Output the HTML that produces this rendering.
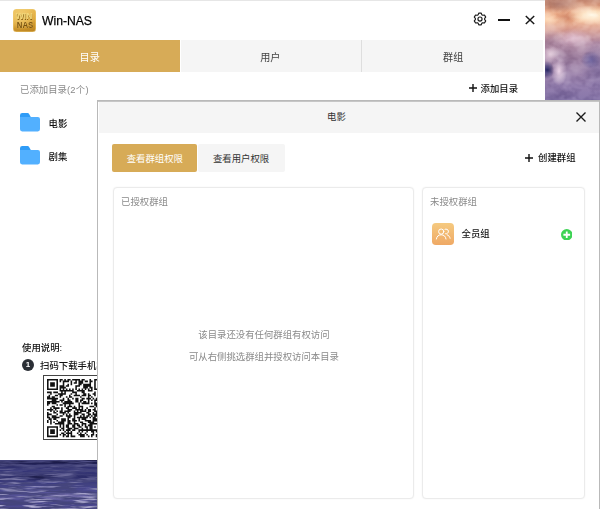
<!DOCTYPE html>
<html lang="zh-CN">
<head>
<meta charset="utf-8">
<title>Win-NAS</title>
<style>
*{box-sizing:border-box;margin:0;padding:0}
html,body{width:600px;height:509px;overflow:hidden;background:#fff}
body{position:relative;font-family:"Liberation Sans","Noto Sans CJK SC",sans-serif;font-size:11px;color:#222}
.abs{position:absolute}
#sky{left:545px;top:0;width:55px;height:101px;overflow:hidden;background:
radial-gradient(ellipse 24px 10px at 47px 15px,rgba(255,250,236,1),rgba(255,238,212,.85) 40%,rgba(255,226,196,0) 100%),
radial-gradient(ellipse 18px 26px at 52px 66px,rgba(118,104,160,.55),rgba(118,104,160,0) 100%),
radial-gradient(ellipse 12px 7px at 2px 19px,rgba(255,226,196,.9),rgba(252,210,176,0) 100%),
radial-gradient(ellipse 22px 9px at 14px 4px,rgba(170,116,104,.85),rgba(176,120,105,0) 100%),
radial-gradient(ellipse 14px 8px at 22px 18px,rgba(206,140,116,.6),rgba(206,140,116,0) 100%),
radial-gradient(ellipse 7px 9px at 2px 70px,rgba(44,44,110,.95),rgba(50,50,115,0) 100%),
radial-gradient(ellipse 8px 15px at 14px 71px,rgba(244,226,240,.95),rgba(240,220,235,0) 100%),
radial-gradient(ellipse 10px 10px at 5px 54px,rgba(236,212,226,.8),rgba(232,208,222,0) 100%),
radial-gradient(ellipse 10px 9px at 46px 60px,rgba(92,86,150,.85),rgba(98,90,152,0) 100%),
radial-gradient(ellipse 20px 9px at 28px 38px,rgba(232,204,220,.85),rgba(225,196,212,0) 100%),
radial-gradient(ellipse 16px 12px at 6px 42px,rgba(150,112,140,.6),rgba(150,112,140,0) 100%),
linear-gradient(180deg,#cf9a86 0%,#ecb596 10%,#f4c09e 20%,#dcaaa0 30%,#bc98ae 42%,#a88aa8 55%,#9e84aa 70%,#947fae 85%,#8877aa 100%)}
#sea{left:0;top:459.500px;width:97.500px;height:50px;overflow:hidden;background:
radial-gradient(ellipse 30px 5px at 62px 36px,rgba(160,150,200,.6),rgba(160,150,200,0) 100%),
radial-gradient(ellipse 26px 4px at 30px 29px,rgba(120,116,176,.5),rgba(120,116,176,0) 100%),
radial-gradient(ellipse 24px 4px at 38px 17px,rgba(24,24,62,.75),rgba(24,24,62,0) 100%),
linear-gradient(180deg,#101034 0%,#222258 8%,#38387a 20%,#2c2c68 34%,#3e3e84 48%,#4c4a90 62%,#5c589c 76%,#444288 88%,#585498 100%)}
#main{left:0;top:0;width:545px;height:460px;background:#fff;border-top:1px solid #e6e6e6}
.t{position:absolute;white-space:nowrap;line-height:14px}
#tabs{left:0;top:39px;width:543px;height:32px;background:#f5f5f5}
#tab1{left:0;top:0;width:180px;height:32px;background:#d7ab57;border-right:0}
.tabt{top:11.300px;color:#444;font-size:10.100px}
#dlg{left:97px;top:100px;width:503px;height:420px;background:#fff;border:1px solid #b9b9b9}
#dh{left:1px;top:1px;width:499.500px;height:30.800px;background:#f5f5f5}
#dlg::before{content:"";position:absolute;left:0;top:0;width:100%;height:.7px;background:#c6c6c6}
.btn{height:28.600px;top:42.500px;font-size:9.38px;text-align:center;line-height:28.600px;padding-top:1.200px;border-radius:2px}
.panel{border:1px solid #ebebeb;border-radius:4px;background:#fff;top:86px;height:311.500px;box-shadow:0 0 2px rgba(0,0,0,.05)}
.g{color:#8a8a8a}
</style>
</head>
<body>
<div id="sky" class="abs"><svg width="55" height="101" style="position:absolute;left:0;top:0;mix-blend-mode:soft-light;opacity:.4"><filter id="cl" x="0" y="0" width="100%" height="100%"><feTurbulence type="fractalNoise" baseFrequency="0.07 0.09" numOctaves="3" seed="11"/><feColorMatrix type="matrix" values="0 0 0 0 0  0 0 0 0 0  0 0 0 0 0  2.2 0 0 0 -0.6"/><feComposite in2="SourceGraphic" operator="in"/></filter><filter id="cd" x="0" y="0" width="100%" height="100%"><feTurbulence type="fractalNoise" baseFrequency="0.06 0.08" numOctaves="3" seed="4"/><feColorMatrix type="matrix" values="0 0 0 0 1  0 0 0 0 1  0 0 0 0 1  0 2.2 0 0 -0.9"/></filter><rect width="55" height="101" fill="#000" filter="url(#cl)"/><rect width="55" height="101" filter="url(#cd)"/></svg></div>
<div id="sea" class="abs"><svg width="98" height="50" style="position:absolute;left:0;top:0"><defs><linearGradient id="mg" x1="0" y1="0" x2="0" y2="1"><stop offset="0" stop-color="#fff" stop-opacity=".1"/><stop offset=".45" stop-color="#fff" stop-opacity=".5"/><stop offset="1" stop-color="#fff" stop-opacity="1"/></linearGradient><mask id="mk"><rect width="98" height="50" fill="url(#mg)"/></mask><filter id="wv" x="0" y="0" width="100%" height="100%"><feTurbulence type="fractalNoise" baseFrequency="0.04 0.4" numOctaves="3" seed="5"/><feColorMatrix type="matrix" values="0 0 0 0 0.06  0 0 0 0 0.06  0 0 0 0 0.2  3.5 0 0 0 -1.15"/></filter><filter id="wl" x="0" y="0" width="100%" height="100%"><feTurbulence type="fractalNoise" baseFrequency="0.04 0.42" numOctaves="3" seed="9"/><feColorMatrix type="matrix" values="0 0 0 0 0.6  0 0 0 0 0.57  0 0 0 0 0.8  0 3.5 0 0 -1.8"/></filter></defs><rect width="98" height="50" filter="url(#wv)"/><g mask="url(#mk)"><rect width="98" height="50" filter="url(#wl)"/></g></svg></div>

<div id="main" class="abs">
  <div class="abs" id="logo" style="left:13px;top:7.700px;width:23px;height:23px;border-radius:3.500px;background:radial-gradient(ellipse 16px 14px at 8px 7px,#f3cf74 0%,rgba(243,207,116,0) 100%),linear-gradient(170deg,#ecc05a 0%,#dda536 50%,#b98220 100%);box-shadow:inset 0 0 0 .6px rgba(240,205,120,.9)">
    <div class="t" style="left:-4.300px;width:30px;text-align:center;top:3px;font-size:9.200px;line-height:8px;font-weight:bold;color:#f2d87c;text-shadow:.5px .6px 0 #8a6214;transform:scaleX(.93)">WIN</div>
    <div class="t" style="left:-3.500px;width:30px;text-align:center;top:12.500px;font-size:9.200px;line-height:8px;font-weight:bold;color:#7a520e;text-shadow:-.4px -.4px 0 rgba(245,215,130,.8);transform:scaleX(.84)">NAS</div>
  </div>
  <div class="t" style="left:42px;top:10.5px;font-size:13.5px;line-height:18px;color:#000;transform-origin:0 50%;transform:scaleX(.9);-webkit-text-stroke:.25px #000">Win-NAS</div>

  <svg class="abs" style="left:471.600px;top:10.400px" width="16" height="16" viewBox="0 0 16 16" fill="none" stroke="#1a1a1a" stroke-width="1.150" stroke-linejoin="round">
    <path d="M9.76 3.64 L9.25 2.13 L6.75 2.13 L6.24 3.64 L5.11 4.30 L3.54 3.99 L2.29 6.15 L3.35 7.35 L3.35 8.65 L2.29 9.85 L3.54 12.01 L5.11 11.70 L6.24 12.36 L6.75 13.87 L9.25 13.87 L9.76 12.36 L10.89 11.70 L12.46 12.01 L13.71 9.85 L12.65 8.65 L12.65 7.35 L13.71 6.15 L12.46 3.99 L10.89 4.30Z"/>
    <circle cx="8" cy="8" r="2.050"/>
  </svg>
  <div class="abs" style="left:498.3px;top:17.900px;width:12.200px;height:1.700px;background:#111"></div>
  <svg class="abs" style="left:523.5px;top:12.800px" width="12" height="12" viewBox="0 0 12 12" stroke="#1a1a1a" stroke-width="1.500"><path d="M1.800 2l8.400 8M10.200 2L1.800 10"/></svg>

  <div id="tabs" class="abs">
    <div id="tab1" class="abs"></div><div class="abs" style="left:180px;top:0;width:1px;height:32px;background:#fff"></div>
    <div class="abs" style="left:361px;top:0;width:1px;height:32px;background:#dedede"></div>
    <div class="t tabt" style="left:0;width:179.400px;text-align:center;color:#fff">目录</div>
    <div class="t tabt" style="left:180px;width:180.600px;text-align:center">用户</div>
    <div class="t tabt" style="left:362px;width:182.400px;text-align:center">群组</div>
  </div>

  <div class="t g" style="left:20px;top:82px;font-size:9.38px">已添加目录<span style="letter-spacing:.3px">(2个)</span></div>
  <svg class="abs" style="left:469.4px;top:82.800px" width="8" height="8" viewBox="0 0 8 8" stroke="#111" stroke-width="1.400"><path d="M4 0v8M0 4h8"/></svg>
  <div class="t" style="left:480.5px;top:80.600px;font-size:9.38px;color:#111;font-weight:500">添加目录</div>

  <svg class="abs" style="left:20.4px;top:112.200px" width="20" height="18.400" viewBox="0 0 20 18.400"><path d="M0 2.200a2.200 2.200 0 0 1 2.200-2.200h5.400a1.800 1.800 0 0 1 1.500.9l1.700 3.100H0z" fill="#2f9cf7"/><path d="M0 3.900h17.900a2.100 2.100 0 0 1 2.100 2.100v10.300a2.100 2.100 0 0 1-2.100 2.100H2.100a2.100 2.100 0 0 1-2.100-2.100z" fill="#52b0ff"/></svg>
  <div class="t" style="left:48.5px;top:115.500px;font-size:9.38px;color:#111;font-weight:500">电影</div>
  <svg class="abs" style="left:20.4px;top:145.200px" width="20" height="18.400" viewBox="0 0 20 18.400"><path d="M0 2.200a2.200 2.200 0 0 1 2.200-2.200h5.400a1.800 1.800 0 0 1 1.500.9l1.700 3.100H0z" fill="#2f9cf7"/><path d="M0 3.900h17.900a2.100 2.100 0 0 1 2.100 2.100v10.300a2.100 2.100 0 0 1-2.100 2.100H2.100a2.100 2.100 0 0 1-2.100-2.100z" fill="#52b0ff"/></svg>
  <div class="t" style="left:48.5px;top:148.500px;font-size:9.38px;color:#111;font-weight:500">剧集</div>

  <div class="t" style="left:22px;top:340px;font-size:9.38px;color:#111;font-weight:500">使用说明:</div>
  <div class="abs" style="left:22px;top:358px;width:12px;height:12px;border-radius:6px;background:#2b2f36;color:#fff;font-size:8px;line-height:12px;text-align:center;font-weight:bold">1</div>
  <div class="t" style="left:40px;top:358px;font-size:9.38px;color:#111;font-weight:500">扫码下载手机客户端</div>
  <div class="abs" id="qr" style="left:43px;top:374.200px;width:65px;height:65px;border:1px solid #444;background:#fff"><svg class="abs" style="left:2.800px;top:3.200px" width="58.200" height="58.200" viewBox="0 0 37 37"><path fill="#111" d="M0 0h7v1h-7zM8 0h2v1h-2zM11 0h1v1h-1zM13 0h2v1h-2zM16 0h5v1h-5zM22 0h2v1h-2zM27 0h1v1h-1zM30 0h7v1h-7zM0 1h1v1h-1zM6 1h1v1h-1zM8 1h1v1h-1zM10 1h4v1h-4zM15 1h1v1h-1zM18 1h1v1h-1zM20 1h3v1h-3zM24 1h2v1h-2zM27 1h2v1h-2zM30 1h1v1h-1zM36 1h1v1h-1zM0 2h1v1h-1zM2 2h3v1h-3zM6 2h1v1h-1zM10 2h1v1h-1zM15 2h1v1h-1zM17 2h2v1h-2zM20 2h3v1h-3zM27 2h1v1h-1zM30 2h1v1h-1zM32 2h3v1h-3zM36 2h1v1h-1zM0 3h1v1h-1zM2 3h3v1h-3zM6 3h1v1h-1zM10 3h1v1h-1zM13 3h1v1h-1zM15 3h1v1h-1zM20 3h2v1h-2zM23 3h5v1h-5zM30 3h1v1h-1zM32 3h3v1h-3zM36 3h1v1h-1zM0 4h1v1h-1zM2 4h3v1h-3zM6 4h1v1h-1zM8 4h3v1h-3zM12 4h2v1h-2zM18 4h3v1h-3zM23 4h5v1h-5zM30 4h1v1h-1zM32 4h3v1h-3zM36 4h1v1h-1zM0 5h1v1h-1zM6 5h1v1h-1zM8 5h4v1h-4zM18 5h1v1h-1zM23 5h3v1h-3zM27 5h2v1h-2zM30 5h1v1h-1zM36 5h1v1h-1zM0 6h7v1h-7zM8 6h1v1h-1zM10 6h1v1h-1zM12 6h1v1h-1zM14 6h1v1h-1zM16 6h1v1h-1zM18 6h1v1h-1zM20 6h1v1h-1zM22 6h1v1h-1zM24 6h1v1h-1zM26 6h1v1h-1zM28 6h1v1h-1zM30 6h7v1h-7zM8 7h9v1h-9zM19 7h5v1h-5zM26 7h3v1h-3zM0 8h3v1h-3zM4 8h3v1h-3zM9 8h1v1h-1zM11 8h1v1h-1zM16 8h3v1h-3zM22 8h2v1h-2zM30 8h1v1h-1zM32 8h5v1h-5zM2 9h1v1h-1zM7 9h5v1h-5zM15 9h1v1h-1zM18 9h1v1h-1zM23 9h2v1h-2zM26 9h1v1h-1zM29 9h2v1h-2zM33 9h3v1h-3zM1 10h1v1h-1zM5 10h2v1h-2zM8 10h2v1h-2zM14 10h1v1h-1zM17 10h4v1h-4zM22 10h3v1h-3zM26 10h2v1h-2zM30 10h1v1h-1zM35 10h2v1h-2zM0 11h2v1h-2zM3 11h2v1h-2zM8 11h1v1h-1zM12 11h1v1h-1zM14 11h2v1h-2zM21 11h1v1h-1zM26 11h1v1h-1zM28 11h1v1h-1zM33 11h1v1h-1zM0 12h7v1h-7zM10 12h1v1h-1zM13 12h1v1h-1zM16 12h1v1h-1zM18 12h2v1h-2zM22 12h2v1h-2zM25 12h3v1h-3zM29 12h1v1h-1zM31 12h3v1h-3zM36 12h1v1h-1zM3 13h3v1h-3zM8 13h3v1h-3zM13 13h2v1h-2zM18 13h2v1h-2zM21 13h2v1h-2zM26 13h1v1h-1zM28 13h1v1h-1zM30 13h2v1h-2zM34 13h2v1h-2zM0 14h8v1h-8zM9 14h1v1h-1zM11 14h5v1h-5zM18 14h2v1h-2zM21 14h1v1h-1zM23 14h2v1h-2zM26 14h1v1h-1zM30 14h1v1h-1zM34 14h3v1h-3zM0 15h2v1h-2zM3 15h3v1h-3zM10 15h7v1h-7zM20 15h1v1h-1zM22 15h5v1h-5zM28 15h1v1h-1zM30 15h7v1h-7zM0 16h1v1h-1zM6 16h1v1h-1zM8 16h2v1h-2zM11 16h1v1h-1zM14 16h1v1h-1zM20 16h1v1h-1zM30 16h5v1h-5zM3 17h2v1h-2zM11 17h1v1h-1zM13 17h3v1h-3zM17 17h1v1h-1zM20 17h3v1h-3zM27 17h3v1h-3zM31 17h1v1h-1zM33 17h3v1h-3zM2 18h1v1h-1zM4 18h4v1h-4zM9 18h1v1h-1zM12 18h2v1h-2zM16 18h3v1h-3zM20 18h1v1h-1zM22 18h1v1h-1zM25 18h1v1h-1zM30 18h1v1h-1zM32 18h5v1h-5zM0 19h4v1h-4zM5 19h1v1h-1zM9 19h1v1h-1zM13 19h3v1h-3zM18 19h5v1h-5zM24 19h1v1h-1zM26 19h2v1h-2zM29 19h2v1h-2zM2 20h1v1h-1zM4 20h1v1h-1zM6 20h1v1h-1zM8 20h2v1h-2zM11 20h4v1h-4zM17 20h1v1h-1zM19 20h1v1h-1zM21 20h4v1h-4zM26 20h2v1h-2zM30 20h7v1h-7zM0 21h1v1h-1zM4 21h2v1h-2zM8 21h4v1h-4zM13 21h1v1h-1zM17 21h5v1h-5zM25 21h2v1h-2zM29 21h1v1h-1zM31 21h2v1h-2zM0 22h3v1h-3zM6 22h1v1h-1zM10 22h1v1h-1zM12 22h1v1h-1zM14 22h1v1h-1zM17 22h3v1h-3zM22 22h2v1h-2zM26 22h2v1h-2zM29 22h3v1h-3zM35 22h2v1h-2zM0 23h1v1h-1zM3 23h3v1h-3zM8 23h2v1h-2zM12 23h4v1h-4zM17 23h1v1h-1zM21 23h1v1h-1zM23 23h1v1h-1zM25 23h2v1h-2zM28 23h1v1h-1zM30 23h4v1h-4zM36 23h1v1h-1zM0 24h2v1h-2zM3 24h5v1h-5zM13 24h2v1h-2zM17 24h1v1h-1zM19 24h7v1h-7zM27 24h1v1h-1zM29 24h2v1h-2zM33 24h4v1h-4zM1 25h2v1h-2zM4 25h2v1h-2zM9 25h3v1h-3zM13 25h1v1h-1zM16 25h2v1h-2zM20 25h1v1h-1zM22 25h3v1h-3zM29 25h3v1h-3zM34 25h3v1h-3zM0 26h1v1h-1zM2 26h1v1h-1zM6 26h1v1h-1zM9 26h3v1h-3zM13 26h2v1h-2zM16 26h3v1h-3zM20 26h1v1h-1zM24 26h4v1h-4zM29 26h3v1h-3zM0 27h1v1h-1zM2 27h1v1h-1zM4 27h1v1h-1zM7 27h4v1h-4zM13 27h2v1h-2zM17 27h1v1h-1zM21 27h2v1h-2zM26 27h4v1h-4zM33 27h1v1h-1zM35 27h2v1h-2zM2 28h1v1h-1zM5 28h6v1h-6zM13 28h3v1h-3zM17 28h3v1h-3zM22 28h3v1h-3zM27 28h7v1h-7zM35 28h2v1h-2zM8 29h1v1h-1zM10 29h1v1h-1zM12 29h2v1h-2zM16 29h2v1h-2zM19 29h2v1h-2zM22 29h1v1h-1zM24 29h1v1h-1zM26 29h3v1h-3zM32 29h2v1h-2zM0 30h7v1h-7zM8 30h1v1h-1zM10 30h1v1h-1zM12 30h2v1h-2zM16 30h2v1h-2zM20 30h2v1h-2zM24 30h2v1h-2zM27 30h2v1h-2zM30 30h1v1h-1zM32 30h1v1h-1zM36 30h1v1h-1zM0 31h1v1h-1zM6 31h1v1h-1zM9 31h2v1h-2zM13 31h3v1h-3zM17 31h3v1h-3zM22 31h1v1h-1zM25 31h1v1h-1zM27 31h2v1h-2zM32 31h1v1h-1zM36 31h1v1h-1zM0 32h1v1h-1zM2 32h3v1h-3zM6 32h1v1h-1zM8 32h1v1h-1zM10 32h1v1h-1zM12 32h3v1h-3zM16 32h2v1h-2zM20 32h13v1h-13zM34 32h1v1h-1zM36 32h1v1h-1zM0 33h1v1h-1zM2 33h3v1h-3zM6 33h1v1h-1zM11 33h1v1h-1zM13 33h1v1h-1zM15 33h1v1h-1zM20 33h1v1h-1zM22 33h1v1h-1zM25 33h1v1h-1zM28 33h2v1h-2zM31 33h1v1h-1zM33 33h1v1h-1zM35 33h1v1h-1zM0 34h1v1h-1zM2 34h3v1h-3zM6 34h1v1h-1zM9 34h2v1h-2zM12 34h4v1h-4zM19 34h1v1h-1zM21 34h1v1h-1zM24 34h1v1h-1zM29 34h1v1h-1zM32 34h1v1h-1zM34 34h1v1h-1zM0 35h1v1h-1zM6 35h1v1h-1zM8 35h1v1h-1zM10 35h2v1h-2zM13 35h1v1h-1zM15 35h1v1h-1zM20 35h4v1h-4zM25 35h1v1h-1zM28 35h2v1h-2zM31 35h6v1h-6zM0 36h7v1h-7zM10 36h1v1h-1zM12 36h2v1h-2zM15 36h3v1h-3zM21 36h3v1h-3zM26 36h1v1h-1zM28 36h1v1h-1zM31 36h1v1h-1zM33 36h1v1h-1zM35 36h2v1h-2z"/></svg></div>
</div>

<div id="dlg" class="abs">
  <div id="dh" class="abs"></div>
  <div class="t" style="left:0;width:477px;text-align:center;top:9px;font-size:9.38px;color:#333">电影</div>
  <svg class="abs" style="left:476.600px;top:10.200px" width="12" height="12" viewBox="0 0 12 12" stroke="#1a1a1a" stroke-width="1.350"><path d="M1.500 1.600l9 8.800M10.500 1.600l-9 8.800"/></svg>

  <div class="abs btn" style="left:14.2px;width:85.300px;background:#d7ab57;color:#fff">查看群组权限</div>
  <div class="abs btn" style="left:99.5px;width:87.200px;background:#f5f5f5;color:#333">查看用户权限</div>
  <svg class="abs" style="left:426.600px;top:52.500px" width="8" height="8" viewBox="0 0 8 8" stroke="#111" stroke-width="1.400"><path d="M4 0v8M0 4h8"/></svg>
  <div class="t" style="left:440px;top:49.500px;font-size:9.38px;color:#111;font-weight:500">创建群组</div>

  <div class="abs panel" style="left:14.5px;width:301px">
    <div class="t g" style="left:7.5px;top:6.500px;font-size:9.38px">已授权群组</div>
    <div class="t g" style="left:0;width:301px;text-align:center;top:139.500px;font-size:9.38px">该目录还没有任何群组有权访问</div>
    <div class="t g" style="left:0;width:301px;text-align:center;top:161.500px;font-size:9.38px">可从右侧挑选群组并授权访问本目录</div>
  </div>
  <div class="abs panel" style="left:323.500px;width:163px">
    <div class="t g" style="left:7.5px;top:6.500px;font-size:9.38px">未授权群组</div>
    <div class="abs" style="left:9.500px;top:35.400px;width:21.700px;height:21.700px;border-radius:3.800px;background:linear-gradient(180deg,#f5ca80,#efa965)">
      <svg class="abs" style="left:0;top:0" width="21.700" height="21.700" viewBox="0 0 21.700 21.700" fill="none" stroke="#fff" stroke-width="1" stroke-linecap="round"><circle cx="9.200" cy="8.600" r="2.600"/><path d="M4.400 16c.3-2.700 2.200-4.200 4.800-4.200s4.500 1.500 4.800 4.200"/><path d="M13 6.300a2.400 2.400 0 1 1 .6 4.500M15.200 11.800c1.600.6 2.600 1.800 2.900 3.500"/></svg>
    </div>
    <div class="t" style="left:39px;top:39.300px;font-size:9.38px;color:#111;font-weight:500">全员组</div>
    <svg class="abs" style="left:138px;top:40.600px" width="11.500" height="11.500" viewBox="0 0 11.500 11.500"><circle cx="5.750" cy="5.750" r="5.750" fill="#3dd354"/><path d="M5.750 2.400v6.700M2.400 5.750h6.700" stroke="#fff" stroke-width="1.800"/></svg>
  </div>
</div>
</body>
</html>
